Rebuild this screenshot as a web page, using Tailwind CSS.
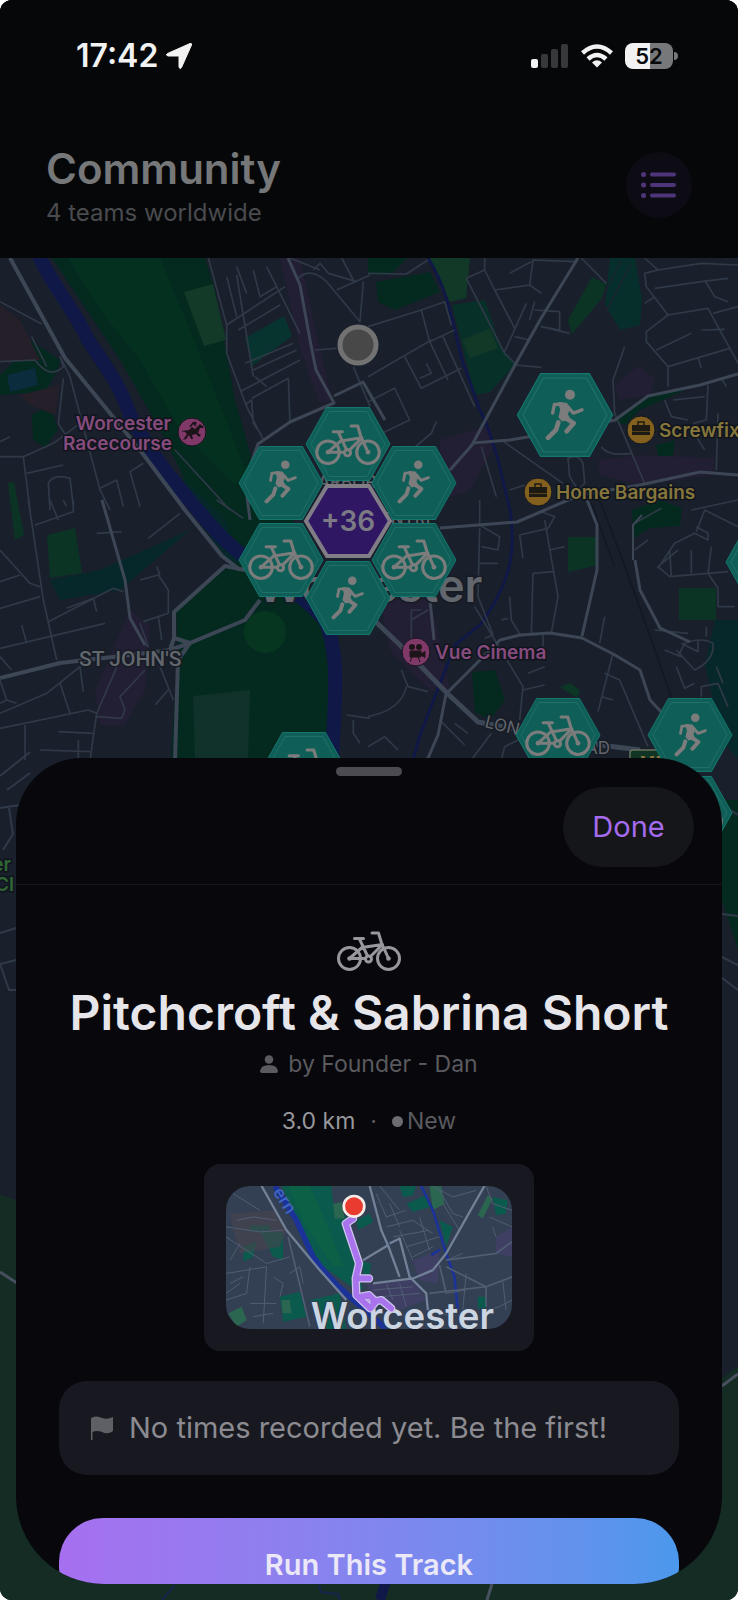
<!DOCTYPE html>
<html lang="en">
<head>
    <meta charset="UTF-8">
    <meta name="viewport" content="width=device-width, initial-scale=1.0">
    <title>Community</title>
    <script src="https://cdn.jsdelivr.net/npm/@tailwindcss/browser@4"></script>
</head>
<body class="bg-white font-['Inter',sans-serif]">

    <!-- Shared icons -->
    <svg class="hidden">
        <symbol id="bike" viewBox="0 0 64 40">
            <g fill="none" stroke="currentColor" stroke-width="3" stroke-linecap="round" stroke-linejoin="round">
                <circle cx="12.5" cy="27.5" r="11" />
                <circle cx="51.5" cy="27.5" r="11" />
                <circle cx="31.5" cy="28" r="3" />
                <path d="M17.5 7.5h9M22.5 8l8 17M12.5 27.5h16M12.5 27.5L25 16.5L45.5 13.5L33.5 25.5M35 2h6.5l3 10l7 15.500" />
            </g>
            <circle cx="12.5" cy="27.500" r="2.300" fill="currentColor" />
            <circle cx="51.5" cy="27.500" r="2.300" fill="currentColor" />
        </symbol>
        <symbol id="run" viewBox="0 0 120 155">
            <circle cx="75" cy="17" r="15" fill="currentColor" />
            <path d="M42 41L64 43L73 58L66 76L74 90L52 94L43 84L48 62Z" fill="currentColor" stroke="currentColor" stroke-width="5" stroke-linejoin="round" />
            <g fill="none" stroke="currentColor" stroke-linecap="round" stroke-linejoin="round">
                <path d="M50 45L28 46L23 72M68 52L85 72L111 62" stroke-width="10" />
                <path d="M58 84L86 102L65 126M40 100L33 122L9 146" stroke-width="14" />
            </g>
        </symbol>
        <symbol id="hex" viewBox="-43 -37 86 74" overflow="visible">
            <path d="M-42 0L-21.500-36.500H21.500L42 0L21.500 36.500H-21.500Z" fill="#0f5f58" stroke="#14766d" />
            <path d="M-37 0L-19-32.500H19L37 0L19 32.500H-19Z" fill="none" stroke="#1f7069" />
        </symbol>
    </svg>

    <div class="relative flex flex-col min-h-screen rounded-xl overflow-hidden bg-[#19202c]">

        <!-- Map -->
        <svg class="absolute inset-0 w-full h-full" viewBox="0 0 738 1600" preserveAspectRatio="xMidYMin slice" role="img" aria-label="Map of Worcester">
            <rect width="738" height="1600" fill="#19202c" />

            <!-- parks and built-up areas -->
            <g fill="#04291f">
                <path d="M52 258H205L215 290L235 400L255 470L290 500L300 560L320 610L330 680L325 770H170L178 650L176 610L230 565L240 545L190 490L160 430L120 360L80 300Z" />
                <path d="M368 258H408L390 275L368 275Z" />
                <path d="M245 338L284 316L292 336L252 366Z" fill="#07342f" />
                <path d="M376 282L430 272L440 292L395 310L378 302Z" />
                <path d="M452 305L485 300L500 345L515 365L490 392L475 395L462 345Z" fill="#073029" />
                <path d="M610 258H635L642 300L640 325L620 330L605 305Z" fill="#062f2c" />
                <path d="M612 420L650 395L690 388L640 410L625 425Z" />
                <path d="M632 510L660 500L682 508L680 526L650 528L634 538Z" />
                <path d="M715 620H738V760L722 740L705 665Z" fill="#06282a" />
                <path d="M472 672L495 670L505 700L490 720L475 712Z" />
                <path d="M656 445L675 440L672 460L660 465Z" />
                <path d="M0 345L20 355L0 375L0 395L45 392L58 370L60 360L30 340Z" />
                <path d="M50 580L100 570L190 530L120 590L60 600Z" fill="#06282a" />
                <path d="M32 415L50 405L58 430L45 447L33 440Z" />
                <path d="M560 687L570 683L580 690L577 698Z" fill="#0c3626" />
                <path d="M722 800H738V950L722 900Z" />
            </g>
            <g fill="#0b3424">
                <path d="M68 258H160L190 330L230 430L245 470L235 485L180 430L140 360L100 310Z" fill="#04301f" />
                <circle cx="265" cy="632" r="21" fill="#063520" />
                <path d="M193 696L250 690L248 758H195Z" fill="#11322a" />
                <path d="M184 292L213 284L226 340L204 346Z" fill="#133a28" />
                <path d="M430 258H470L466 298L450 302L440 285Z" fill="#123828" />
                <path d="M462 340L490 328L498 348L470 358Z" fill="#123828" />
                <path d="M568 320L592 277L606 284L602 298L572 334Z" />
                <path d="M568 537H598V565L568 572Z" />
                <path d="M679 588H716V620H679Z" />
                <path d="M47 535L75 528L82 573L50 578Z" />
                <path d="M8 483L14 482L24 535L15 540Z" />
            </g>
            <path d="M180 475L225 520L240 560L232 566L205 530Z" fill="#06282a" />
            <path d="M0 305L20 320L40 360L0 362ZM20 395L60 385L55 415L30 405Z" fill="#241f29" />
            <path d="M7 375L35 368L38 385L10 392Z" fill="#0a2c3c" />
            <g fill="#221e33">
                <path d="M280 258L300 258L318 340L332 400L320 404L300 350Z" />
                <path d="M440 440L490 425L495 445L470 490L440 500Z" />
                <path d="M615 385L640 365L655 380L650 395L620 400Z" />
                <path d="M598 460L640 455L715 458L712 475L640 485L600 475Z" />
                <path d="M95 690L130 610L150 625L145 690L125 725L100 725Z" />
                <path d="M380 600L430 600L440 640L450 690L430 690L390 650Z" />
            </g>

            <!-- rivers -->
            <g fill="none" stroke="#101848" stroke-linecap="round">
                <path d="M40 258C55 290 75 310 88 340C105 365 120 385 130 415C150 455 180 490 215 530C240 560 300 590 325 620C342 660 333 710 332 770" stroke-width="14" />
                <path d="M428 258C448 290 452 320 462 360L480 410C490 430 492 440 498 460L510 510C518 560 505 590 480 625L455 645L420 735L410 770" stroke-width="3" />
            </g>

            <!-- side streets, left -->
            <g transform="translate(0 250) scale(.33333)" fill="none" stroke="#303948" stroke-width="5" stroke-linejoin="round">
                <path d="M0 155L125 222M0 335L105 330Q150 390 190 350L180 320L210 380L300 720L330 780M190 385L175 520L200 560M95 260L140 350M0 620H70L160 580L240 520M70 620L90 780M80 670L190 645M150 780L145 700Q160 670 210 685L220 770M300 715L350 690L370 770M430 640L390 665L420 770" />
                <path d="M625 24L680 225L855 110M680 225V310L740 470L790 570M710 75L760 380M760 60L780 140L830 110M715 240L840 165M735 340L880 280M760 360L890 300M720 425L900 330M755 445L865 385L870 520M735 465L755 450L760 520L785 555M800 50L900 250M895 85Q930 50 980 95L1080 215L1090 95M1010 120L1110 75M940 60L960 40L985 70L1070 95M945 300L1010 295M1060 350L1110 470M525 600L690 780" />
                <path d="M710 50L740 130M870 24L960 60M680 80L710 200M765 380L800 410M1025 24L1060 90M0 575L30 560" />
            </g>
            <g transform="translate(0 500) scale(.33333)" fill="none" stroke="#303948" stroke-width="5" stroke-linejoin="round">
                <path d="M0 150L90 250L120 260M0 245L60 225M85 0L130 300L170 480M105 75L220 35V0M150 0L175 60M190 0L200 20M0 325L120 290M0 445L315 370M145 365L340 265L370 275M200 325L280 295L290 335M65 375L80 430M0 470L35 510M290 100L365 95M445 115L540 40M420 240L475 225L505 270V340L430 365M470 200L480 225M475 350L485 420M0 640L140 580L240 500L250 575M0 685L265 630L290 640L355 490M180 550L210 640M0 540L20 600L50 610M20 600L0 610M290 640L270 780M75 675V780M120 750L270 755M235 720V780M175 695L280 700M290 650L365 655L375 630L360 590L435 510M480 500L520 600M465 615L505 570M430 430L445 440L420 370M1040 645L1110 655M1060 660L1060 700L1080 730M650 0L730 55" />
            </g>
            <!-- side streets, right -->
            <g transform="translate(368 250) scale(.33333)" fill="none" stroke="#303948" stroke-width="5" stroke-linejoin="round">
                <path d="M0 70L115 72L180 30M0 230L160 180L230 155L250 225M160 180L185 275L260 240M0 380L190 270M110 320L160 415L280 355M175 340L190 370L155 385M185 275L240 390M225 260L320 470M0 455L80 415L125 510L0 570M350 24V60L295 85L410 310L445 345L520 352M350 60L380 120L485 105L495 30L620 35M380 120L440 235M485 105L520 130M410 305L475 160M440 260L485 270M500 180L575 185V240L520 230L605 250M500 155L485 210M425 70L490 35M640 24L715 100" />
                <path d="M830 24L870 60L1000 40L1110 45M870 60L830 70L835 110L900 195L835 245V275L900 350V410M860 115L1000 95L1080 85M1010 90L1040 140L1080 155M900 195L1020 175L1110 340M865 300L970 250M900 350L1085 295M990 320L1000 355M1000 240L1070 238M830 160L860 140M1035 190L1110 170M770 290L735 390L740 490L830 700M890 450L910 500L960 510M1020 405L1015 510L975 520M915 450L1010 440M1060 385L1075 410M1050 490L1045 660M700 590Q720 620 790 610M400 570L585 700M600 625Q630 610 645 640L650 700L630 720L605 680ZM340 590L385 740M130 600L190 550L205 515M425 720L470 705M985 560L1010 600" />
                <path d="M590 370L760 30M610 380L790 40" stroke="#1c222d" stroke-width="4" />
            </g>
            <g transform="translate(368 500) scale(.33333)" fill="none" stroke="#303948" stroke-width="5" stroke-linejoin="round">
                <path d="M455 105L540 85L560 50L520 35M455 105L465 175M530 60L570 290L550 400M545 150L590 140M490 405L495 220L555 215M335 0V75L395 110L390 150L340 140M335 85L330 290L375 405L350 415M330 190H390M320 320L465 560L455 660M465 570L530 555M425 290L430 360L460 410M525 405V440M480 520L530 500M710 350L695 430M400 360L420 355M100 510L120 560L180 575M0 650Q100 630 115 560M160 330H130V420M130 360L180 330M0 740L50 710L90 750M220 665L290 735M260 670L300 700M370 700L310 780M400 780L410 740L450 720" />
                <path d="M800 70L880 25M1110 0L970 30M800 150L840 120M870 205L920 130L980 100L1020 120V100L985 80M930 150L870 200L905 230L1080 215M905 150L910 230M970 150V220M1030 140L1020 220L1050 265V320H1100M985 95L1010 30L1110 80M735 460L690 635M710 520L755 540L840 740M860 390L960 400M925 450L980 510Q1040 480 1035 430Q1000 410 950 430L930 470M940 430L990 455V420M1015 380V410M925 500L950 565L980 550M890 450L940 470M1000 590V560L1050 550L1080 620M700 590L735 600M1045 500L1065 550" />
                <path d="M695 0L760 170L850 420L920 620M670 10L740 200" stroke="#131922" stroke-width="5" />
            </g>
            <!-- edges beside the sheet -->
            <path d="M0 776L30 752M7 790L30 773M0 808L20 805M9 808L13 834L3 850M0 933L16 928M0 964L16 960M0 964L9 990H16M722 914L738 916M722 957L738 965M722 978L738 990M722 805L738 815" fill="none" stroke="#303948" stroke-width="2" />
            <path d="M0 1285H16V1200L0 1195ZM0 1285H18V1600H0ZM722 1378L738 1366V1600H722ZM0 1500H738V1600H0Z" fill="#152c25" />
            <path d="M175 1585L162 1600M319 1585L321 1592L338 1594L340 1600" fill="none" stroke="#14244a" stroke-width="2" />
            <path d="M386 1580L380 1600" stroke="#101848" stroke-width="10" />
            <path d="M492 1584L487 1600M0 1272L20 1285M722 1386L738 1374" stroke="#485060" stroke-width="3" />

            <!-- main roads -->
            <g fill="none" stroke="#3c4655" stroke-linejoin="round">
                <path d="M10 258L65 358L140 450L185 510L222 556L240 570" stroke-width="4" />
                <path d="M288 258L300 285L310 340L316 370L334 403L290 422L258 444L245 480L250 520" stroke-width="3" />
                <path d="M334 396L363 382L385 420" stroke-width="3" />
                <path d="M578 258L540 320L515 365L480 430L472 445L450 470" stroke-width="3" />
                <path d="M472 443L510 440L568 430L615 420L648 396L700 385L738 374" stroke-width="3" />
                <path d="M440 528L517 522L545 510L580 495L640 485L700 472L738 475" stroke-width="3" />
                <path d="M587 500L597 525V570L582 636" stroke-width="3" />
                <path d="M102 500L125 580L130 618L145 645" stroke-width="3" />
                <path d="M260 600L245 620L190 643L174 638V612L225 566L245 570M0 678L60 663L130 655L170 650L190 643L178 660L175 760M174 638L170 650" stroke-width="4" />
                <path d="M376 622L400 645L448 694L478 722L520 730L600 745L640 750" stroke-width="5" />
                <path d="M430 600L434 640M446 694L438 735L425 765M446 694L500 640L520 635L550 633L582 638L615 655L640 670L650 700L665 716" stroke-width="3" />
                <path d="M635 560L640 590L660 628L690 642" stroke-width="3" />
                <path d="M633 560V525L642 515" stroke-width="2" />
            </g>

            <!-- place names -->
            <g font-family="Inter, sans-serif" fill="#62666d" stroke="#161b24" paint-order="stroke">
                <text x="257" y="602" font-size="45" font-weight="600" stroke-width="3">Worcester</text>
                <text x="79" y="666" font-family="Roboto, sans-serif" font-size="21" font-weight="500" stroke-width="3">ST JOHN'S</text>
                <text x="318" y="488" font-size="17" font-weight="500" stroke-width="3">ARBOR</text>
                <text x="368" y="525" font-size="17" font-weight="500" stroke-width="3">CENTRE</text>
                <text transform="translate(484 727) rotate(14)" font-size="17" stroke-width="3">LON</text>
                <text x="586" y="754" font-size="17" stroke-width="3">AD</text>
            </g>
            <g font-family="Inter, sans-serif" font-size="19" font-weight="600" stroke="#10141c" stroke-width="3" paint-order="stroke">
                <text x="171" y="430" text-anchor="end" fill="#864c7e">Worcester</text>
                <text x="172" y="450" text-anchor="end" fill="#864c7e">Racecourse</text>
                <text x="435" y="659" fill="#864c7e">Vue Cinema</text>
                <text x="659" y="437" fill="#85763c">Screwfix</text>
                <text x="556" y="499" fill="#85763c">Home Bargains</text>
                <text x="11" y="871" text-anchor="end" fill="#2f6634">Worcester</text>
                <text x="14" y="891" text-anchor="end" fill="#2f6634">Golf Cl</text>
            </g>

            <!-- places -->
            <g stroke="#11151d">
                <circle cx="192" cy="432" r="14" fill="#803868" />
                <circle cx="416" cy="652" r="14" fill="#803868" />
                <circle cx="641" cy="430" r="14" fill="#84601f" />
                <circle cx="538" cy="492" r="14" fill="#84601f" />
            </g>
            <g fill="#1d1419">
                <path d="M181 431l8-1l3-3l3 2l5-5l4 3l-1 1l-3 0l-2 5l3 2l-2 2l-3-3l-4 1l1 4l-2 0l-2-4l-3 4l-3 1l4-6l-2-2z" />
                <path d="M190 427l3-4l3 3" fill="none" stroke="#1d1419" stroke-width="1.500" />
                <circle cx="195" cy="423" r="1.600" />
                <circle cx="412" cy="647" r="3" /><circle cx="419" cy="647" r="3" />
                <path d="M410 651h11v6h-11zM421 654l4-2.500v6l-4-2.500zM412 657l-2 5M418 657l2 5" stroke="#1d1419" />
            </g>
            <g fill="#1d1a14">
                <path d="M632 425h18v10h-18zM529 487h18v10h-18z" />
                <path d="M638 425v-3h6v3M535 487v-3h6v3" fill="none" stroke="#1d1a14" stroke-width="1.500" />
                <path d="M632 431.500h18M529 493.500h18" stroke="#5a431a" />
            </g>
            <rect x="630" y="750" width="40" height="24" rx="3" fill="#123424" stroke="#68725c" stroke-width="1.500" />
            <text x="640" y="768" font-family="Roboto, sans-serif" font-size="17" font-weight="700" fill="#85763c">M5</text>

            <circle cx="358" cy="345" r="18" fill="#484848" stroke="#727272" stroke-width="5" />

            <!-- track pins -->
            <g color="#7c7c7c">
                <use href="#hex" x="516" y="373" width="98" height="84" />
                <use href="#run" x="545" y="389" width="40" height="52" />
                <use href="#hex" x="305" y="407" width="86" height="74" />
                <use href="#bike" x="315" y="424" width="66" height="41" />
                <use href="#hex" x="238" y="446" width="86" height="74" />
                <use href="#run" x="264" y="460" width="34" height="44" />
                <use href="#hex" x="371" y="446" width="86" height="74" />
                <use href="#run" x="397" y="460" width="34" height="44" />
                <use href="#hex" x="238" y="523" width="86" height="74" />
                <use href="#bike" x="248" y="539" width="66" height="41" />
                <use href="#hex" x="371" y="523" width="86" height="74" />
                <use href="#bike" x="381" y="539" width="66" height="41" />
                <use href="#hex" x="305" y="561" width="86" height="74" />
                <use href="#run" x="331" y="576" width="34" height="44" />
                <use href="#hex" x="515" y="698" width="86" height="74" />
                <use href="#bike" x="525" y="715" width="66" height="41" />
                <use href="#hex" x="261" y="732" width="86" height="74" />
                <use href="#bike" x="271" y="748" width="66" height="41" />
                <use href="#hex" x="647" y="776" width="86" height="74" />
                <use href="#bike" x="657" y="793" width="66" height="41" />
                <use href="#hex" x="647" y="698" width="86" height="74" />
                <use href="#run" x="674" y="713" width="34" height="44" />
                <use href="#hex" x="725" y="525" width="86" height="74" />
            </g>
            <path d="M306 521L327 486H369L390 521L369 556H327Z" fill="#2f1763" stroke="#817d86" stroke-width="4" />
            <text x="348" y="531" text-anchor="middle" font-family="Inter, sans-serif" font-size="28" font-weight="600" fill="#7c7a84">+36</text>
        </svg>

        <!-- Header -->
        <header class="relative h-[258px] bg-[#060709] pt-9">
            <div class="flex items-center justify-between h-10 pl-[76px] pr-[60px] text-[#f2f2f2]">
                <div class="flex items-center gap-2 text-[32px] font-semibold">
                    <span>17:42</span>
                    <svg class="w-[26px] h-[26px]" viewBox="0 0 26 26" fill="currentColor"><path d="M24 .5Q26 0 25.500 2L15.500 24.500Q14 27 13 24V13.500Q13 13 12.500 13H2Q-1 12 1.500 10.500Z" stroke="currentColor" /></svg>
                </div>
                <div class="flex items-center gap-3">
                    <svg class="w-[38px] h-6" viewBox="0 0 38 24">
                        <rect x="0" y="15" width="7" height="9" rx="2" fill="#f2f2f2" />
                        <rect x="10" y="10" width="7" height="14" rx="2" fill="#37383a" />
                        <rect x="20" y="5" width="7" height="19" rx="2" fill="#37383a" />
                        <rect x="30" y="0" width="7" height="24" rx="2" fill="#37383a" />
                    </svg>
                    <svg class="w-8 h-6" viewBox="0 0 32 24" fill="none" stroke="currentColor" stroke-width="4.500">
                        <path d="M1.500 9Q16-4 30.500 9M7 15Q16 7 25 15" />
                        <path d="M16 23.500L11 18.500Q16 14 21 18.500Z" fill="currentColor" stroke="none" />
                    </svg>
                    <div class="flex items-center gap-px">
                        <div class="flex items-center justify-center w-12 h-[26px] rounded-lg bg-linear-to-r from-[#f2f2f2] from-52% to-[#77787a] to-52% text-[22px] font-semibold text-[#08090b]">52</div>
                        <div class="w-1 h-2 rounded-r-full bg-[#77787a]"></div>
                    </div>
                </div>
            </div>
            <div class="flex items-center justify-between px-[46px] pt-[69px]">
                <div>
                    <h1 class="text-[42px] leading-[48px] font-semibold text-[#767779]">Community</h1>
                    <p class="pt-1 text-2xl leading-8 text-[#4a4b4e]">4 teams worldwide</p>
                </div>
                <button class="flex items-center justify-center w-[66px] h-[66px] mb-1 rounded-full bg-[#0d0b14] text-[#4e3478]" aria-label="List view">
                    <svg class="w-9 h-7" viewBox="0 0 36 28" fill="none" stroke="currentColor" stroke-width="4" stroke-linecap="round"><path d="M2.500 3.500h.1M2.500 14h.1M2.500 24.500h.1M11 3.500h22M11 14h22M11 24.500h22" /><path d="M2.500 3.500h.1M2.500 14h.1M2.500 24.500h.1" stroke-width="5" /></svg>
                </button>
            </div>
        </header>

        <div class="flex-1"></div>

        <!-- Track sheet -->
        <section class="relative h-[826px] mx-4 mb-4 overflow-hidden rounded-t-[66px] rounded-b-[88px] bg-[#07070c]">
            <div class="flex flex-col h-[127px] px-7 pt-[9px] border-b border-[#16161b]">
                <div class="w-[66px] h-[9px] mx-auto rounded-full bg-[#4c4b51]"></div>
                <button class="self-end mt-[11px] w-[131px] h-20 rounded-full bg-[#15161a] text-[29px] text-[#a56bee]">Done</button>
            </div>

            <div class="flex flex-col items-center px-[43px] pt-[46px]">
                <svg class="w-16 h-10 text-[#98979c]"><use href="#bike" /></svg>
                <h2 class="pt-3 text-[48px] leading-[60px] font-semibold text-[#e6e5e9] whitespace-nowrap">Pitchcroft &amp; Sabrina Short</h2>
                <p class="flex items-center gap-[10px] pt-[5px] text-[23px] leading-8 text-[#5a5a5f]">
                    <svg class="w-[18px] h-[18px]" viewBox="0 0 18 18" fill="currentColor"><circle cx="9" cy="4.500" r="4.300" /><path d="M0 16Q1 10 9 10Q17 10 18 16Q18 18 16 18H2Q0 18 0 16Z" /></svg>
                    by Founder - Dan
                </p>
                <p class="flex items-center pt-[25px] text-[23px] leading-8 text-[#5a5a5f]">
                    <span class="text-[#98979c]">3.0 km</span>
                    <span class="px-[15px]">·</span>
                    <span class="w-[11px] h-[11px] mr-1 rounded-full bg-[#6c6c71]"></span>
                    New
                </p>

                <div class="mt-[27px] p-[22px] rounded-2xl bg-[#181920]">
                    <svg class="w-[286px] h-[143px] rounded-3xl" viewBox="78 107 860 430" role="img" aria-label="Route preview">
                        <rect x="78" y="107" width="860" height="430" fill="#333f53" />
                        <g fill="#0b5a4e">
                            <path d="M245 107H395L400 160L440 200L470 340L490 420L455 410L370 350L320 280Z" />
                            <path d="M240 440L300 425L320 500L250 515ZM470 210L510 190L520 215L475 240ZM620 160L680 135L690 170L640 185ZM720 210L760 230L740 290ZM880 140L925 150L920 190L890 195ZM600 107H650L640 135L610 140ZM180 245H250L250 330L220 320ZM490 335L515 340L510 370L490 375ZM150 225H210V245H150ZM130 290L170 275L160 320L130 335ZM330 450L420 430L440 537H380ZM835 440H860V475H835Z" />
                        </g>
                        <path d="M262 107H330L390 240L430 350L400 350L320 230Z" fill="#0b6045" />
                        <path d="M690 107H725L735 160L700 180ZM835 195L865 135L880 145L850 205ZM85 490L125 470L140 510L110 530ZM400 160L425 155L435 205L405 205ZM245 450L270 450L275 490L248 490Z" fill="#2b6650" />
                        <path d="M90 190L230 180L260 240L240 290L120 310L100 240Z" fill="#49444e" opacity=".6" />
                        <path d="M500 400L640 385L680 450L600 480L520 440ZM640 330L720 300L715 400L660 390ZM890 260L938 230V320L890 310Z" fill="#44406b" opacity=".7" />
                        <g fill="none" stroke="#1b3398">
                            <path d="M225 107L290 210L340 320Q390 390 450 440L560 537" stroke-width="17" />
                            <path d="M665 107L700 180L740 310L765 380L775 480" stroke-width="8" />
                            <path d="M695 315L722 298" stroke-width="8" />
                        </g>
                        <g fill="none" stroke="#505d73" stroke-width="3">
                            <path d="M78 230L180 245L250 240M78 260L200 340L270 320M110 210L160 200L230 210M78 370L200 350M150 350L140 430L78 450M200 350L190 520M220 380L250 400L240 440M270 370L300 350L310 400M90 400L130 380M78 430L120 400M150 460H230M160 500L220 490M120 280L90 330M100 130L180 180M530 130L560 200L620 180M540 107L600 180M560 230L640 210L700 250M580 260L690 240M600 240L640 330M620 290L720 260M640 320L700 290M570 160L600 230M660 200L690 300M720 120L760 190L790 200M730 160L780 240M700 107L760 140L830 120M860 107L880 160L938 180M870 200L938 230M880 230L890 260M740 330L790 310M600 400L620 470M560 400L580 450M520 420L640 410M540 440L660 430M730 380L740 430L800 420M800 370L790 480M910 390L920 480M860 480L900 470L938 450M690 480L760 500" />
                            <path d="M265 260L330 530M740 330L890 310L938 275M740 350L860 410L938 380M690 430L860 410V470M720 345L740 430" stroke-width="5" />
                        </g>
                        <g fill="none" stroke="#728198" stroke-linejoin="round">
                            <path d="M185 107L260 240L360 360L440 450M510 107L545 240L565 285L490 330M565 285L600 380M570 280L600 265L630 380L680 430L685 480M855 107L740 310L700 360L640 385L520 400" stroke-width="7" />
                        </g>
                        <text transform="translate(218 125) rotate(58)" font-family="Inter, sans-serif" font-size="52" font-weight="500" fill="#4167c4">ern</text>
                        <text x="333" y="537" font-family="Inter, sans-serif" font-size="110" font-weight="600" fill="#ccd6e2" stroke="#333f53" stroke-width="6" paint-order="stroke">Worcester</text>
                        <g fill="none" stroke-linecap="round" stroke-linejoin="round">
                            <path d="M460 205L438 220L478 340L468 385H508L468 385L470 435L512 475L528 455L508 435L480 440M520 455L545 450L575 475" stroke="#ccc3ec" stroke-width="25" />
                            <path d="M460 205L438 220L478 340L468 385H508L468 385L470 435L512 475L528 455L508 435L480 440M520 455L545 450L575 475" stroke="#a873ec" stroke-width="17" />
                        </g>
                        <circle cx="463" cy="168" r="31" fill="#ea3b30" stroke="#f6ece8" stroke-width="8" />
                    </svg>
                </div>

                <div class="flex items-center gap-4 w-full h-[94px] mt-[30px] px-8 rounded-[28px] bg-[#181920] text-[29px] text-[#8b8b91]">
                    <svg class="w-[22px] h-6 text-[#5f6065]" viewBox="0 0 22 24" fill="currentColor"><path d="M0 2Q5-1 11 2Q16 4 22 1V15Q17 19 11 16Q6 14 1.500 16V24H0Z" /></svg>
                    <span>No times recorded yet. Be the first!</span>
                </div>

                <button class="w-full h-[94px] mt-[43px] rounded-[44px] bg-linear-to-r from-[#a66ff0] to-[#4b98ec] text-[29px] font-semibold text-[#ebe8f8]">Run This Track</button>
            </div>
        </section>
    </div>
</body>
</html>
